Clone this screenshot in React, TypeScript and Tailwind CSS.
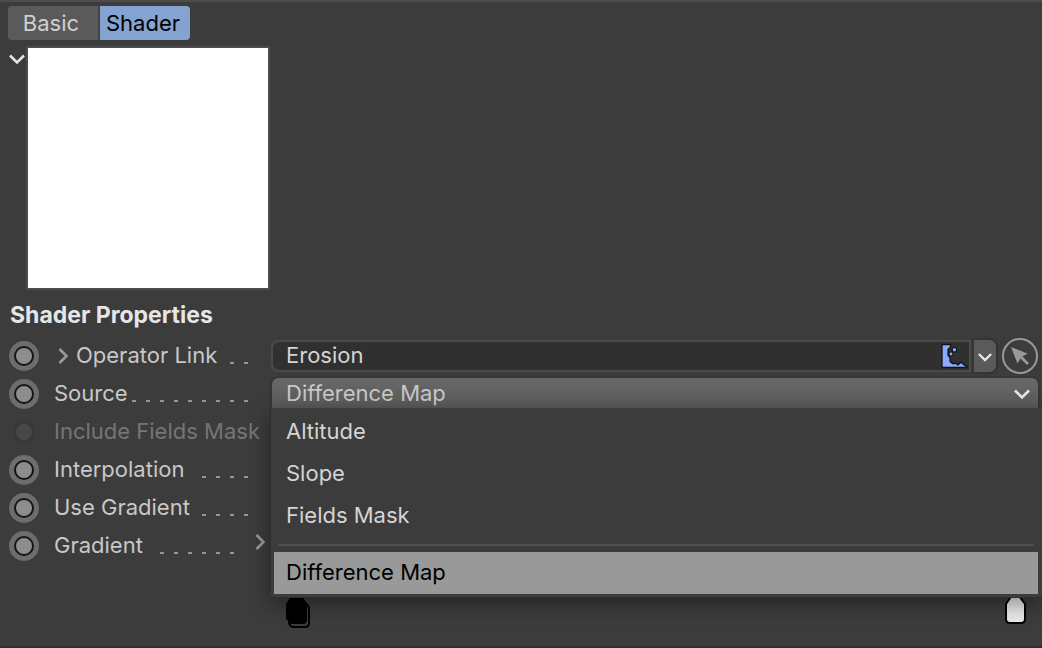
import { useState } from "react";

interface RowProps {
  label: string;
  dashes?: number;
  disabled?: boolean;
  expandable?: boolean;
  trailing?: boolean;
  htmlFor?: string;
  children?: React.ReactNode;
}

function Chevron({ dir, className }: { dir: "down" | "right"; className: string }) {
  return (
    <svg viewBox="0 0 16 16" fill="none" stroke="currentColor" strokeWidth="2.6" className={className} aria-hidden="true">
      <path d={dir === "down" ? "M1 4.5 8 11.5 15 4.5" : "M4.5 1 11.5 8 4.5 15"} />
    </svg>
  );
}

function KeyDot({ label, disabled }: { label: string; disabled?: boolean }) {
  return (
    <button
      type="button"
      aria-label={`Keyframe ${label}`}
      disabled={disabled}
      className="flex size-[30px] shrink-0 items-center justify-center rounded-full bg-[#6d6d6d] disabled:bg-transparent"
    >
      <span
        className={`size-5 rounded-full border-2 ${disabled ? "border-[#373737] bg-[#484848]" : "border-[#151515] bg-[#8d8d8d]"}`}
      />
    </button>
  );
}

function Row({ label, dashes = 0, disabled, expandable, trailing, htmlFor, children }: RowProps) {
  return (
    <div className="flex h-[38px] items-center">
      <div className="flex w-[262px] shrink-0 items-center">
        <KeyDot label={label} disabled={disabled} />
        {expandable && (
          <button type="button" aria-label={`Expand ${label}`} className="ml-4 -mr-3 w-[18px] text-[#999999]">
            <Chevron dir="right" className="size-4" />
          </button>
        )}
        <label
          htmlFor={htmlFor}
          className={`ml-[15px] pb-0.5 whitespace-nowrap ${disabled ? "text-[#757575]" : "text-[#c8c8c8]"}`}
        >
          {label}
        </label>
        {!disabled && (
          <div className={`flex flex-1 justify-end gap-2.5 pt-3.5 ${trailing ? "pr-1" : "pr-[23px]"}`} aria-hidden="true">
            {Array.from({ length: dashes }, (_, i) => (
              <span key={i} className="h-0.5 w-1 bg-[#969696]" />
            ))}
          </div>
        )}
        {trailing && (
          <button type="button" aria-label={`Expand ${label}`} className="mr-[3px] ml-3.5 pb-2 text-[#999999]">
            <Chevron dir="right" className="size-4" />
          </button>
        )}
      </div>
      {children}
    </div>
  );
}

function ErosionIcon() {
  return (
    <svg viewBox="0 0 28 26" className="mr-px h-[26px] w-7 shrink-0" aria-hidden="true">
      <path
        d="M2 1.5H10.5V4L8 6.5V12.5L10 14.5V18.5L12.5 20.5H16L18 22L20.5 19.5L22.5 20L24 22L27 23.5V24.5H2Z"
        fill="#8aaaff"
        stroke="#141414"
        strokeWidth="1.3"
      />
      <circle cx="11" cy="11" r="2.4" fill="#141414" />
      <circle cx="14.4" cy="6.8" r="2.8" fill="#141414" />
      <circle cx="11" cy="11" r="1.4" fill="#8aaaff" />
      <circle cx="14.4" cy="6.8" r="1.7" fill="#8aaaff" />
    </svg>
  );
}

const SOURCES = ["Altitude", "Slope", "Fields Mask", "Difference Map"];

function SourceOption({ name, selected, onSelect }: { name: string; selected: boolean; onSelect: (name: string) => void }) {
  return (
    <button
      type="button"
      role="option"
      aria-selected={selected}
      onClick={() => onSelect(name)}
      className={`mr-1 ml-[3px] h-[42px] px-3 pb-0.5 text-left ${selected ? "bg-[#999999] text-black" : "text-[#d4d4d4]"}`}
    >
      {name}
    </button>
  );
}

function SourceSelect() {
  const [source, setSource] = useState("Difference Map");

  return (
    <div className="relative mr-1 mb-0.5 flex-1">
      <select
        id="source"
        value={source}
        onChange={(e) => setSource(e.target.value)}
        className="block h-[30px] w-full appearance-none rounded-t-md bg-linear-to-b from-[#686868] to-[#5a5a5a] px-3.5 text-[#c8c8c8] outline-2 outline-[#363636]"
      >
        {SOURCES.map((s) => (
          <option key={s}>{s}</option>
        ))}
      </select>
      <Chevron dir="down" className="pointer-events-none absolute top-2 right-2 size-4 text-[#e8e8e8]" />

      {/* Open menu */}
      <div
        role="listbox"
        aria-label="Source"
        className="absolute top-full -right-1 -left-0.5 z-10 flex flex-col border-b border-l border-[#303030] bg-[#3c3c3c] pt-[3px] pb-[3px] shadow-[0_6px_20px_rgba(0,0,0,0.4)]"
      >
        {SOURCES.slice(0, 3).map((s) => (
          <SourceOption key={s} name={s} selected={s === source} onSelect={setSource} />
        ))}
        <div className="mr-2 ml-[7px] mt-[7px] mb-1.5 h-0.5 bg-[#505050]" />
        <SourceOption name="Difference Map" selected={source === "Difference Map"} onSelect={setSource} />
      </div>
    </div>
  );
}

export default function App() {
  const [tab, setTab] = useState("Shader");
  const [link, setLink] = useState("Erosion");

  return (
    <div className="flex min-h-screen flex-col overflow-hidden border-t-2 border-b-2 border-t-[#4d4d4d] border-b-[#352e31] bg-[#3c3c3c] font-[Inter,sans-serif] text-[22px] leading-7 text-[#c8c8c8]">
      {/* Tabs */}
      <div role="tablist" className="mt-1 ml-2 flex h-[34px] gap-0.5 self-start overflow-hidden rounded-sm bg-[#444444]">
        {["Basic", "Shader"].map((t) => (
          <button
            key={t}
            type="button"
            role="tab"
            aria-selected={t === tab}
            onClick={() => setTab(t)}
            className={`w-[90px] pr-1 text-center ${t === tab ? "bg-[#85a3d0] text-black" : "bg-[#5a5a5a] text-[#d0d0d0]"}`}
          >
            {t}
          </button>
        ))}
      </div>

      {/* Preview */}
      <div className="mt-1.5 ml-[9px] flex items-start">
        <button type="button" aria-label="Collapse preview" className="mt-[5px] w-[17px] text-[#e4e4e4]">
          <Chevron dir="down" className="size-4" />
        </button>
        <div className="size-[244px] border-2 border-[#4c4c4c] bg-white" />
      </div>

      <h2 className="mt-[11px] mb-2 ml-2.5 text-[23px] font-bold text-[#e6e6e6]">Shader Properties</h2>

      <div className="ml-[9px] flex flex-col">
        <Row label="Operator Link" dashes={2} expandable htmlFor="operator-link">
          <div className="flex h-8 min-w-0 flex-1 items-center rounded-l-lg border-2 border-[#4a4a4a] bg-[#303030]">
            <input
              id="operator-link"
              value={link}
              onChange={(e) => setLink(e.target.value)}
              className="min-w-0 flex-1 bg-transparent pb-0.5 pl-[13px] text-[#d4d4d4] outline-none"
            />
            <ErosionIcon />
          </div>
          <button
            type="button"
            aria-label="Link options"
            className="ml-[3px] flex h-8 w-[22px] items-center justify-center rounded-r-md bg-[#5a5a5a] text-[#e8e8e8] outline-2 outline-[#343434]"
          >
            <Chevron dir="down" className="mt-0.5 size-3.5" />
          </button>
          <button type="button" aria-label="Pick object" className="mr-1 ml-1.5 text-[#999999]">
            <svg viewBox="0 0 36 36" className="size-9" aria-hidden="true">
              <circle cx="18" cy="18" r="17" fill="none" stroke="currentColor" strokeWidth="2" />
              <path d="M9 9 25.5 15.5 20.5 18.5 27 25 25 27 18.5 20.5 15.5 25.5Z" fill="currentColor" />
            </svg>
          </button>
        </Row>
        <Row label="Source" dashes={9} htmlFor="source">
          <div className="w-px" />
          <SourceSelect />
        </Row>
        <Row label="Include Fields Mask" disabled />
        <Row label="Interpolation" dashes={4} />
        <Row label="Use Gradient" dashes={4} />
        <Row label="Gradient" dashes={6} trailing />
      </div>

      {/* Gradient knots */}
      <div className="mt-[31px] mr-4 ml-[285px] flex items-start justify-between">
        <button type="button" aria-label="Black knot">
          <svg viewBox="0 0 26 34" className="h-[34px] w-[26px]" aria-hidden="true">
            <path d="M8 4H18L24 11V27Q24 31 20 31H9Q5 31 4 27Z" fill="#3c3c3c" stroke="#000" strokeWidth="2" />
            <path d="M6 0H17L22 8V23Q22 28 18 28H6L1 23V8Z" fill="#000" />
          </svg>
        </button>
        <button type="button" aria-label="White knot">
          <svg viewBox="0 0 22 30" className="h-[30px] w-[22px]" aria-hidden="true">
            <path d="M7.5 0H15L21 8V23Q21 27 17 27H6Q2 27 2 23V8Z" fill="#e9e9e9" stroke="#000" strokeWidth="2" />
          </svg>
        </button>
      </div>
    </div>
  );
}
